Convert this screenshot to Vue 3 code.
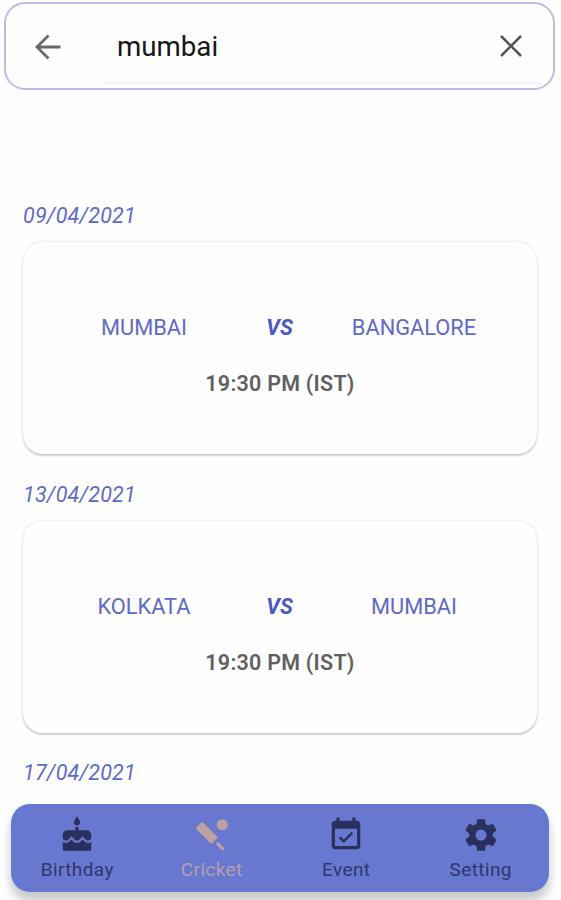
<script setup>
const matches = [
  { date: '09/04/2021', home: 'MUMBAI', away: 'BANGALORE', time: '19:30 PM (IST)' },
  { date: '13/04/2021', home: 'KOLKATA', away: 'MUMBAI', time: '19:30 PM (IST)' },
]

const tabs = [
  {
    label: 'Birthday',
    path: 'M12 6c1.11 0 2-.9 2-2 0-.38-.1-.73-.29-1.03L12 0l-1.71 2.97c-.19.3-.29.65-.29 1.03 0 1.1.9 2 2 2zm4.6 9.99-1.07-1.07-1.08 1.07c-1.3 1.3-3.58 1.31-4.89 0l-1.07-1.07-1.09 1.07C6.75 16.64 5.88 17 4.96 17c-.73 0-1.4-.23-1.96-.61V21c0 .55.45 1 1 1h16c.55 0 1-.45 1-1v-4.61c-.56.38-1.23.61-1.96.61-.92 0-1.79-.36-2.44-1.01zM18 9h-5V7h-2v2H6c-1.66 0-3 1.34-3 3v1.54c0 1.08.88 1.96 1.96 1.96.52 0 1.02-.2 1.38-.57l2.14-2.13 2.13 2.13c.74.74 2.03.74 2.77 0l2.14-2.13 2.13 2.13c.37.37.86.57 1.38.57 1.08 0 1.96-.88 1.96-1.96V12C21 10.34 19.66 9 18 9z',
  },
  {
    label: 'Cricket',
    active: true,
    path: 'M15.05 12.81 6.56 4.32c-.39-.39-1.02-.39-1.41 0L2.32 7.15c-.39.39-.39 1.02 0 1.41l8.49 8.49c.39.39 1.02.39 1.41 0l2.83-2.83c.39-.39.39-1.02 0-1.41zM14.34 17.76l1.42-1.42L20 20.59 18.59 22zM18.5 2a3.5 3.5 0 1 1 0 7 3.5 3.5 0 0 1 0-7z',
  },
  {
    label: 'Event',
    path: 'M16.53 11.06 15.47 10l-4.88 4.88-2.12-2.12-1.06 1.06L10.59 17l5.94-5.94zM19 3h-1V1h-2v2H8V1H6v2H5c-1.11 0-1.99.9-1.99 2L3 19c0 1.1.89 2 2 2h14c1.1 0 2-.9 2-2V5c0-1.1-.9-2-2-2zm0 16H5V8h14v11z',
  },
  {
    label: 'Setting',
    path: 'M12 15.5A3.5 3.5 0 0 1 8.5 12 3.5 3.5 0 0 1 12 8.5a3.5 3.5 0 0 1 3.5 3.5 3.5 3.5 0 0 1-3.5 3.5m7.43-2.53c.04-.32.07-.64.07-.97s-.03-.66-.07-1l2.11-1.63c.19-.15.24-.42.12-.64l-2-3.46c-.12-.22-.39-.31-.61-.22l-2.49 1c-.52-.39-1.06-.73-1.69-.98l-.37-2.65A.506.506 0 0 0 14 2h-4c-.25 0-.46.18-.5.42l-.37 2.65c-.63.25-1.17.59-1.69.98l-2.49-1c-.22-.09-.49 0-.61.22l-2 3.46c-.13.22-.07.49.12.64L4.57 11c-.04.34-.07.67-.07 1s.03.65.07.97l-2.11 1.66c-.19.15-.25.42-.12.64l2 3.46c.12.22.39.3.61.22l2.49-1.01c.52.4 1.06.74 1.69.99l.37 2.65c.04.24.25.42.5.42h4c.25 0 .46-.18.5-.42l.37-2.65c.63-.26 1.17-.59 1.69-.99l2.49 1.01c.22.08.49 0 .61-.22l2-3.46c.12-.22.07-.49-.12-.64z',
  },
]
</script>

<template>
  <div class="screen">
    <header class="search">
      <svg class="back" viewBox="0 0 26 26"><path d="M25.5 13H2M13.5 1.5 2 13l11.5 11.5" /></svg>
      <div class="field">
        <span class="query">mumbai</span>
        <svg class="clear" viewBox="0 0 24 24"><path d="m2 2 20 20M22 2 2 22" /></svg>
      </div>
    </header>

    <main class="list">
      <section v-for="m in matches" :key="m.date" class="entry">
        <div class="date">{{ m.date }}</div>
        <article class="card">
          <div class="teams">
            <span class="team">{{ m.home }}</span>
            <span class="vs">VS</span>
            <span class="team">{{ m.away }}</span>
          </div>
          <div class="time">{{ m.time }}</div>
        </article>
      </section>
      <div class="date">17/04/2021</div>
    </main>

    <nav class="tabs">
      <div v-for="t in tabs" :key="t.label" class="tab" :class="{ active: t.active }">
        <svg class="icon" viewBox="0 0 24 24"><path :d="t.path" /></svg>
        <span class="label">{{ t.label }}</span>
      </div>
    </nav>
  </div>
</template>

<style>
body {
  background: #fefefe;
  overflow: hidden;
}
</style>

<style scoped>
.screen {
  box-sizing: border-box;
  display: flex;
  flex-direction: column;
  width: 561px;
  height: 900px;
  padding: 2px 0 8px;
  overflow: hidden;
  background: #fefefe;
  font-family: Roboto, sans-serif;
}
.search {
  box-sizing: border-box;
  display: flex;
  flex: none;
  align-items: flex-start;
  width: 551px;
  height: 88px;
  margin-left: 4px;
  border: 2px solid #bcbcec;
  border-radius: 21px;
}
.back {
  flex: none;
  width: 26px;
  height: 26px;
  margin: 29.5px 0 0 29px;
  fill: none;
  stroke: #686868;
  stroke-width: 2.8;
}
.field {
  box-sizing: border-box;
  display: flex;
  align-items: center;
  justify-content: space-between;
  width: 437px;
  height: 80px;
  margin-left: 43px;
  padding: 6px 18px 0 13px;
  border-bottom: 2px solid #f3f3f3;
}
.query {
  padding-top: 2px;
  color: #161616;
  font-size: 27.7px;
  line-height: 40px;
}
.clear {
  width: 24px;
  height: 24px;
  fill: none;
  stroke: #555;
  stroke-width: 2.5;
}
.list {
  flex: none;
  height: 602px;
  padding: 112px 24px 0 23px;
}
.date {
  height: 28px;
  color: #5f69ca;
  font-size: 21.5px;
  font-style: italic;
  letter-spacing: 0.2px;
  line-height: 28px;
}
.entry {
  height: 278.5px;
}
.card {
  box-sizing: border-box;
  height: 212px;
  margin-top: 12px;
  padding-top: 71px;
  border-radius: 20px;
  background: #fefefe;
  box-shadow: 0 0 3px rgba(0, 0, 0, 0.14), 0 2px 2px rgba(0, 0, 0, 0.16);
}
.teams {
  display: grid;
  grid-template-columns: 242px 29px 240px;
  line-height: 30px;
  text-align: center;
}
.team {
  color: #5f69ca;
  font-size: 21.8px;
}
.vs {
  color: #4a57c4;
  font-size: 21.5px;
  font-style: italic;
  font-weight: 700;
}
.time {
  margin-top: 26px;
  color: #606060;
  font-size: 21.5px;
  font-weight: 600;
  letter-spacing: 0.25px;
  line-height: 30px;
  text-align: center;
}
.tabs {
  box-sizing: border-box;
  display: grid;
  flex: none;
  grid-template-columns: repeat(4, 134.5px);
  width: 538px;
  height: 88px;
  margin: 0 0 0 10.5px;
  padding-top: 12px;
  border-radius: 19px;
  background: #6877cf;
  box-shadow: 0 8px 9px 1px rgba(0, 0, 0, 0.2);
}
.tab {
  display: flex;
  flex-direction: column;
  align-items: center;
  color: #2e376e;
}
.icon {
  width: 38px;
  height: 38px;
  margin-right: 1px;
  fill: #29305c;
}
.label {
  margin-right: 1px;
  padding-top: 1px;
  font-size: 19px;
  letter-spacing: 0.4px;
  line-height: 30px;
}
.active {
  color: #b59fae;
}
.active .icon {
  fill: #bda29f;
}
</style>
